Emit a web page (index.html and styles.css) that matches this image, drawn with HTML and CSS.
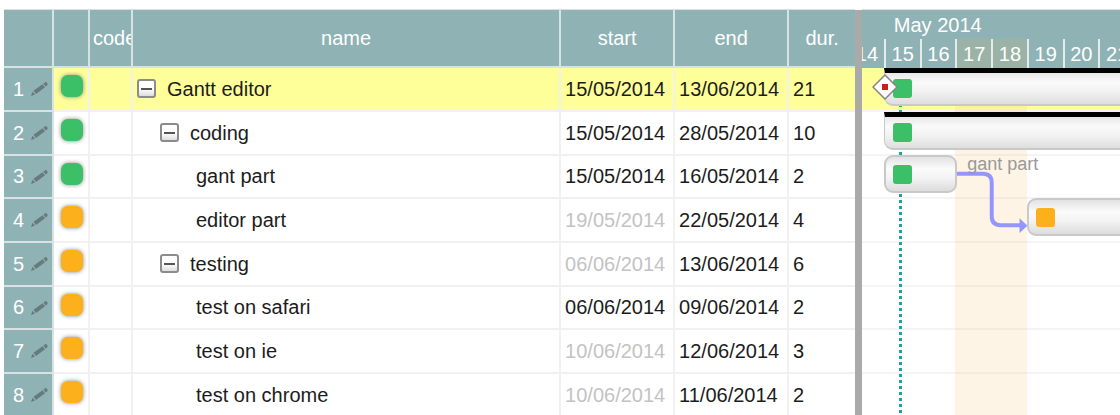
FILE: index.html
```
<!DOCTYPE html>
<html lang="en">
<head>
    <meta charset="UTF-8">
    <title>Gantt editor</title>
    <link rel="stylesheet" href="styles.css">
</head>
<body>
    <svg class="symbols" aria-hidden="true">
        <symbol id="pencil" viewBox="0 0 18 16">
            <path d="M1 15 L2.500 10.800 L5 13.600 Z" />
            <path d="M3.500 9.800 L12.600 3.200 L15 6.300 L6 13 Z" />
            <path d="M13.400 2.600 L15.300 1.200 Q16.200 .8 16.800 1.600 L17.500 2.700 Q17.900 3.600 17.200 4.300 L15.700 5.600 Z" />
        </symbol>
    </svg>

    <div class="gantt">
        <table class="tasks">
            <colgroup>
                <col class="col-index">
                <col class="col-status">
                <col class="col-code">
                <col>
                <col class="col-date">
                <col class="col-date">
                <col class="col-dur">
            </colgroup>
            <thead>
                <tr>
                    <th></th>
                    <th></th>
                    <th class="code">code</th>
                    <th>name</th>
                    <th>start</th>
                    <th>end</th>
                    <th>dur.</th>
                </tr>
            </thead>
            <tbody>
                <tr class="selected">
                    <th><div class="index">1<button class="edit" aria-label="Edit"><svg><use href="#pencil"/></svg></button></div></th>
                    <td class="state"><span class="status active"></span></td>
                    <td></td>
                    <td><div class="name"><button class="toggle" aria-label="Collapse"></button>Gantt editor</div></td>
                    <td>15/05/2014</td>
                    <td>13/06/2014</td>
                    <td>21</td>
                </tr>
                <tr>
                    <th><div class="index">2<button class="edit" aria-label="Edit"><svg><use href="#pencil"/></svg></button></div></th>
                    <td class="state"><span class="status active"></span></td>
                    <td></td>
                    <td><div class="name level-1"><button class="toggle" aria-label="Collapse"></button>coding</div></td>
                    <td>15/05/2014</td>
                    <td>28/05/2014</td>
                    <td>10</td>
                </tr>
                <tr>
                    <th><div class="index">3<button class="edit" aria-label="Edit"><svg><use href="#pencil"/></svg></button></div></th>
                    <td class="state"><span class="status active"></span></td>
                    <td></td>
                    <td><div class="name level-2">gant part</div></td>
                    <td>15/05/2014</td>
                    <td>16/05/2014</td>
                    <td>2</td>
                </tr>
                <tr>
                    <th><div class="index">4<button class="edit" aria-label="Edit"><svg><use href="#pencil"/></svg></button></div></th>
                    <td class="state"><span class="status suspended"></span></td>
                    <td></td>
                    <td><div class="name level-2">editor part</div></td>
                    <td class="locked">19/05/2014</td>
                    <td>22/05/2014</td>
                    <td>4</td>
                </tr>
                <tr>
                    <th><div class="index">5<button class="edit" aria-label="Edit"><svg><use href="#pencil"/></svg></button></div></th>
                    <td class="state"><span class="status suspended"></span></td>
                    <td></td>
                    <td><div class="name level-1"><button class="toggle" aria-label="Collapse"></button>testing</div></td>
                    <td class="locked">06/06/2014</td>
                    <td>13/06/2014</td>
                    <td>6</td>
                </tr>
                <tr>
                    <th><div class="index">6<button class="edit" aria-label="Edit"><svg><use href="#pencil"/></svg></button></div></th>
                    <td class="state"><span class="status suspended"></span></td>
                    <td></td>
                    <td><div class="name level-2">test on safari</div></td>
                    <td>06/06/2014</td>
                    <td>09/06/2014</td>
                    <td>2</td>
                </tr>
                <tr>
                    <th><div class="index">7<button class="edit" aria-label="Edit"><svg><use href="#pencil"/></svg></button></div></th>
                    <td class="state"><span class="status suspended"></span></td>
                    <td></td>
                    <td><div class="name level-2">test on ie</div></td>
                    <td class="locked">10/06/2014</td>
                    <td>12/06/2014</td>
                    <td>3</td>
                </tr>
                <tr>
                    <th><div class="index">8<button class="edit" aria-label="Edit"><svg><use href="#pencil"/></svg></button></div></th>
                    <td class="state"><span class="status suspended"></span></td>
                    <td></td>
                    <td><div class="name level-2">test on chrome</div></td>
                    <td class="locked">10/06/2014</td>
                    <td>11/06/2014</td>
                    <td>2</td>
                </tr>
            </tbody>
        </table>

        <div class="splitter"></div>

        <div class="timeline">
            <div class="scroller">
                <div class="calendar">
                    <div class="month">May 2014</div>
                    <div class="day">14</div>
                    <div class="day">15</div>
                    <div class="day">16</div>
                    <div class="day holiday">17</div>
                    <div class="day holiday">18</div>
                    <div class="day">19</div>
                    <div class="day">20</div>
                    <div class="day">21</div>
                </div>
                <div class="chart">
                    <div class="line line-1 selected"></div>
                    <div class="line line-2"></div>
                    <div class="line line-3"></div>
                    <div class="line line-4"></div>
                    <div class="line line-5"></div>
                    <div class="line line-6"></div>
                    <div class="line line-7"></div>
                    <div class="line line-8"></div>
                    <div class="weekend"></div>
                    <div class="today"></div>

                    <svg class="link" viewBox="0 0 72 88" preserveAspectRatio="none">
                        <path class="wire" d="M1 18 H28 Q37 18 37 27 V61 Q37 70 46 70 H66" />
                        <path class="arrow" d="M65 63 L73 70.500 L65 78 Z" />
                    </svg>
                    <div class="bar-label">gant part</div>

                    <div class="bar group task-1">
                        <span class="mark active"></span>
                        <svg class="milestone" viewBox="0 0 26 26">
                            <path d="M13 1 L25 13 L13 25 L1 13 Z" />
                            <rect x="10" y="10" width="6" height="6" />
                        </svg>
                    </div>
                    <div class="bar group task-2"><span class="mark active"></span></div>
                    <div class="bar task-3"><span class="mark active"></span></div>
                    <div class="bar task-4"><span class="mark suspended"></span></div>
                </div>
            </div>
        </div>
    </div>
</body>
</html>
```
FILE: styles.css
```
* {
    box-sizing: border-box;
}

body {
    margin: 0;
    height: 100vh;
    overflow: hidden;
    background-color: white;
    font-family: Arial, "Liberation Sans", sans-serif;
    font-size: 20px;
    color: #1c1c1c;
}

button {
    padding: 0;
    border: none;
    background: none;
    cursor: pointer;
}

.symbols {
    display: none;
}

.gantt {
    display: grid;
    grid-template-columns: 33fr 7px 10fr;
    align-items: start;
    padding: 9px 0 0 4px;
}

/* task table */
.tasks {
    table-layout: fixed;
    width: 100%;
    border-spacing: 0;
    border-top: 1px solid #dcdfdf;
}

.col-index {
    width: 50px;
}

.col-status {
    width: 36px;
}

.col-code {
    width: 43px;
}

.col-date {
    width: 114px;
}

.col-dur {
    width: 66px;
}

.tasks th,
.tasks td {
    height: 44px;
    padding: 0 4px;
    border-right: 2px solid #f1f1f1;
    border-bottom: 2px solid #f1f1f1;
    white-space: nowrap;
    overflow: hidden;
}

.tasks th {
    background-color: #8fb2b5;
    border-color: #d8e2e3;
    color: white;
    font-weight: normal;
}

.tasks thead th {
    height: 58px;
}

/* every third row is a pixel shorter, same as in .chart */
.tasks tbody tr:nth-child(3n) > * {
    height: 43px;
}

.tasks th:last-child,
.tasks td:last-child {
    border-right: none;
}

.tasks .code {
    padding: 0 3px;
    text-align: left;
}

.tasks .locked {
    color: #c3c3c3;
}

.selected {
    background-color: #ffff99;
}

.index {
    display: flex;
    align-items: center;
    justify-content: space-between;
    padding-left: 5px;
}

.edit {
    height: 16px;
}

.edit svg {
    display: block;
    width: 18px;
    height: 16px;
    fill: #677b7c;
}

.tasks .state {
    padding: 7px 7px 0;
    vertical-align: top;
}

.status {
    display: block;
    width: 22px;
    height: 22px;
    border-radius: 7px;
    box-shadow: 0 0 4px #888;
}

.active {
    background-color: #3bbf67;
}

.suspended {
    background-color: #fcb01c;
}

.name {
    display: flex;
    align-items: center;
    gap: 11px;
}

.level-1 {
    padding-left: 23px;
}

.level-2 {
    padding-left: 59px;
}

.toggle {
    display: grid;
    place-items: center;
    width: 19px;
    height: 19px;
    margin-bottom: 1px;
    border: 2px solid #8c8c8c;
    border-radius: 3px;
    background: linear-gradient(white 50%, #dedede);
}

.toggle::before {
    content: "";
    width: 11px;
    height: 2px;
    background-color: #555;
}

.splitter {
    align-self: stretch;
    margin-top: 1px;
    background-color: #aaa;
    cursor: col-resize;
}

/* timeline */
.timeline {
    overflow: hidden;
    border-top: 1px solid #dcdfdf;
}

.scroller {
    width: calc(100% + 28px);
    margin-left: -14px;
}

.calendar,
.chart {
    display: grid;
    grid-template-columns: repeat(8, 1fr);
}

.calendar {
    grid-template-rows: 29px 29px;
    background-color: #8fb2b5;
    color: white;
    line-height: 31px;
}

.month {
    grid-column: 2 / -1;
    padding-left: 10px;
}

.day {
    border-left: 2px solid #e4eced;
    text-align: center;
}

.day:nth-child(2) {
    grid-column: 1;
}

.holiday {
    background-color: #9bb3a6;
}

.chart {
    grid-template-rows: 44px 44px 43px 44px 44px 43px 44px 44px;
}

.line {
    grid-column: 1 / -1;
    border-bottom: 2px solid #f4f4f4;
}

.line-1 { grid-row: 1; }
.line-2 { grid-row: 2; }
.line-3 { grid-row: 3; }
.line-4 { grid-row: 4; }
.line-5 { grid-row: 5; }
.line-6 { grid-row: 6; }
.line-7 { grid-row: 7; }
.line-8 { grid-row: 8; }

.weekend {
    grid-column: 4 / 6;
    grid-row: 1 / -1;
    background-color: rgba(250, 200, 125, 0.2);
}

.today {
    grid-column: 2;
    grid-row: 1 / -1;
    justify-self: center;
    width: 3px;
    margin-right: 2px;
    background: repeating-linear-gradient(#1aa597 0 3px, transparent 3px 6px);
}

.bar {
    position: relative;
    display: flex;
    align-items: center;
    height: 38px;
    margin-top: -1px;
    padding-left: 7px;
    border: 2px solid #c9c9c9;
    border-radius: 9px;
    background: linear-gradient(#e2e2e2, #fbfbfb 35%, #f4f4f4 60%, #dcdcdc);
}

.group {
    margin-top: 0;
    border-top: 5px solid black;
    border-right: none;
    border-radius: 0 0 0 9px;
    border-left-width: 1px;
    padding-left: 8px;
    background: linear-gradient(#e8e8e8, #fafafa 30%, #f2f2f2 60%, #dedede);
}

.task-1 {
    grid-column: 2 / -1;
    grid-row: 1;
}

.task-2 {
    grid-column: 2 / -1;
    grid-row: 2;
}

.task-3 {
    grid-column: 2 / 4;
    grid-row: 3;
    margin-right: -2px;
}

.task-4 {
    grid-column: 6 / -1;
    grid-row: 4;
}

.mark {
    width: 19px;
    height: 19px;
    border-radius: 3px;
}

.milestone {
    position: absolute;
    left: -13px;
    top: 1px;
    width: 26px;
    height: 26px;
}

.milestone path {
    fill: white;
    stroke: #858585;
    stroke-width: 1.5;
}

.milestone rect {
    fill: #c9211a;
}

.bar-label {
    grid-column: 4 / 7;
    grid-row: 3;
    padding-left: 12px;
    font-size: 18px;
    line-height: 16px;
    color: #999;
}

.link {
    grid-column: 4 / 6;
    grid-row: 3 / 5;
    width: 100%;
    height: 87px;
    overflow: visible;
}

.wire {
    fill: none;
    stroke: #9595ff;
    stroke-width: 4;
}

.arrow {
    fill: #9595ff;
}
```
